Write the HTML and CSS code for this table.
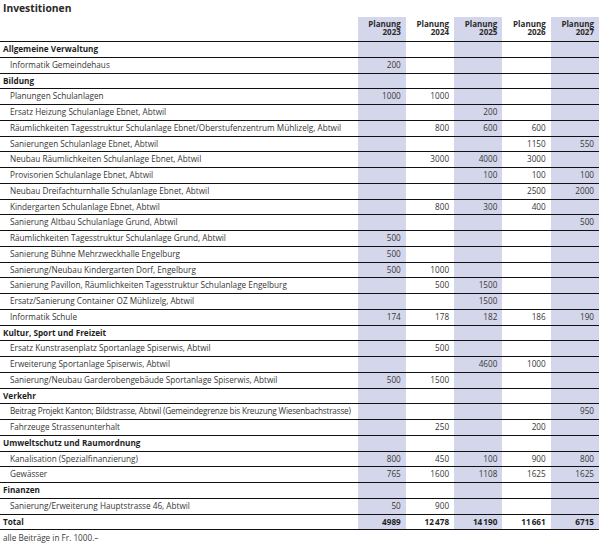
FILE: index.html
```html
<!DOCTYPE html>
<html lang="de">
<head>
<meta charset="utf-8">
<title>Investitionen</title>
<link rel="stylesheet" href="styles.css">
</head>
<body>
<div class="page">
  <h1 class="title">Investitionen</h1>
  <table class="inv">
    <colgroup>
      <col class="c-label">
      <col class="c-num"><col class="c-num"><col class="c-num"><col class="c-num"><col class="c-num">
    </colgroup>
    <thead>
      <tr>
        <th class="label-h"></th>
        <th class="sh"><span class="hl">Planung</span><span class="hl">2023</span></th>
        <th><span class="hl">Planung</span><span class="hl">2024</span></th>
        <th class="sh"><span class="hl">Planung</span><span class="hl">2025</span></th>
        <th><span class="hl">Planung</span><span class="hl">2026</span></th>
        <th class="sh"><span class="hl">Planung</span><span class="hl">2027</span></th>
      </tr>
    </thead>
    <tbody>
      <tr class="cat"><td>Allgemeine Verwaltung</td><td class="sh"></td><td></td><td class="sh"></td><td></td><td class="sh"></td></tr>
      <tr><td>Informatik Gemeindehaus</td><td class="sh">200</td><td></td><td class="sh"></td><td></td><td class="sh"></td></tr>
      <tr class="cat"><td>Bildung</td><td class="sh"></td><td></td><td class="sh"></td><td></td><td class="sh"></td></tr>
      <tr><td>Planungen Schulanlagen</td><td class="sh">1000</td><td>1000</td><td class="sh"></td><td></td><td class="sh"></td></tr>
      <tr><td>Ersatz Heizung Schulanlage Ebnet, Abtwil</td><td class="sh"></td><td></td><td class="sh">200</td><td></td><td class="sh"></td></tr>
      <tr><td>Räumlichkeiten Tagesstruktur Schulanlage Ebnet/Oberstufenzentrum Mühlizelg, Abtwil</td><td class="sh"></td><td>800</td><td class="sh">600</td><td>600</td><td class="sh"></td></tr>
      <tr><td>Sanierungen Schulanlage Ebnet, Abtwil</td><td class="sh"></td><td></td><td class="sh"></td><td>1150</td><td class="sh">550</td></tr>
      <tr><td>Neubau Räumlichkeiten Schulanlage Ebnet, Abtwil</td><td class="sh"></td><td>3000</td><td class="sh">4000</td><td>3000</td><td class="sh"></td></tr>
      <tr><td>Provisorien Schulanlage Ebnet, Abtwil</td><td class="sh"></td><td></td><td class="sh">100</td><td>100</td><td class="sh">100</td></tr>
      <tr><td>Neubau Dreifachturnhalle Schulanlage Ebnet, Abtwil</td><td class="sh"></td><td></td><td class="sh"></td><td>2500</td><td class="sh">2000</td></tr>
      <tr><td>Kindergarten Schulanlage Ebnet, Abtwil</td><td class="sh"></td><td>800</td><td class="sh">300</td><td>400</td><td class="sh"></td></tr>
      <tr><td>Sanierung Altbau Schulanlage Grund, Abtwil</td><td class="sh"></td><td></td><td class="sh"></td><td></td><td class="sh">500</td></tr>
      <tr><td>Räumlichkeiten Tagesstruktur Schulanlage Grund, Abtwil</td><td class="sh">500</td><td></td><td class="sh"></td><td></td><td class="sh"></td></tr>
      <tr><td>Sanierung Bühne Mehrzweckhalle Engelburg</td><td class="sh">500</td><td></td><td class="sh"></td><td></td><td class="sh"></td></tr>
      <tr><td>Sanierung/Neubau Kindergarten Dorf, Engelburg</td><td class="sh">500</td><td>1000</td><td class="sh"></td><td></td><td class="sh"></td></tr>
      <tr><td>Sanierung Pavillon, Räumlichkeiten Tagesstruktur Schulanlage Engelburg</td><td class="sh"></td><td>500</td><td class="sh">1500</td><td></td><td class="sh"></td></tr>
      <tr><td>Ersatz/Sanierung Container OZ Mühlizelg, Abtwil</td><td class="sh"></td><td></td><td class="sh">1500</td><td></td><td class="sh"></td></tr>
      <tr><td>Informatik Schule</td><td class="sh">174</td><td>178</td><td class="sh">182</td><td>186</td><td class="sh">190</td></tr>
      <tr class="cat"><td>Kultur, Sport und Freizeit</td><td class="sh"></td><td></td><td class="sh"></td><td></td><td class="sh"></td></tr>
      <tr><td>Ersatz Kunstrasenplatz Sportanlage Spiserwis, Abtwil</td><td class="sh"></td><td>500</td><td class="sh"></td><td></td><td class="sh"></td></tr>
      <tr><td>Erweiterung Sportanlage Spiserwis, Abtwil</td><td class="sh"></td><td></td><td class="sh">4600</td><td>1000</td><td class="sh"></td></tr>
      <tr><td>Sanierung/Neubau Garderobengebäude Sportanlage Spiserwis, Abtwil</td><td class="sh">500</td><td>1500</td><td class="sh"></td><td></td><td class="sh"></td></tr>
      <tr class="cat"><td>Verkehr</td><td class="sh"></td><td></td><td class="sh"></td><td></td><td class="sh"></td></tr>
      <tr><td class="wide">Beitrag Projekt Kanton; Bildstrasse, Abtwil (Gemeindegrenze bis Kreuzung Wiesenbachstrasse)</td><td class="sh"></td><td></td><td class="sh"></td><td></td><td class="sh">950</td></tr>
      <tr><td>Fahrzeuge Strassenunterhalt</td><td class="sh"></td><td>250</td><td class="sh"></td><td>200</td><td class="sh"></td></tr>
      <tr class="cat"><td>Umweltschutz und Raumordnung</td><td class="sh"></td><td></td><td class="sh"></td><td></td><td class="sh"></td></tr>
      <tr><td>Kanalisation (Spezialfinanzierung)</td><td class="sh">800</td><td>450</td><td class="sh">100</td><td>900</td><td class="sh">800</td></tr>
      <tr><td>Gewässer</td><td class="sh">765</td><td>1600</td><td class="sh">1108</td><td>1625</td><td class="sh">1625</td></tr>
      <tr class="cat"><td>Finanzen</td><td class="sh"></td><td></td><td class="sh"></td><td></td><td class="sh"></td></tr>
      <tr><td>Sanierung/Erweiterung Hauptstrasse 46, Abtwil</td><td class="sh">50</td><td>900</td><td class="sh"></td><td></td><td class="sh"></td></tr>
      <tr class="cat total"><td>Total</td><td class="sh">4989</td><td>12&#8239;478</td><td class="sh">14&#8239;190</td><td>11&#8239;661</td><td class="sh">6715</td></tr>
    </tbody>
  </table>
  <p class="note">alle Beiträge in Fr. 1000.–</p>
</div>
</body>
</html>
```

FILE: styles.css
```css
html, body {
  margin: 0;
  padding: 0;
  background: #ffffff;
}

.page {
  width: 608px;
  font-family: "Open Sans", "Noto Sans", sans-serif;
  color: #3a3a3a;
}

.title {
  margin: 0;
  padding-left: 3px;
  font-size: 10.3px;
  line-height: 17px;
  font-weight: 700;
  color: #2a2a2a;
}

.inv {
  width: 599px;
  border-collapse: collapse;
  table-layout: fixed;
  font-size: 8.2px;
}

.c-label { width: 357.5px; }
.c-num { width: 48.3px; }

.inv th {
  height: 15px;
  padding: 3px 5px 5px 0;
  font-size: 8px;
  font-weight: 700;
  text-align: right;
  vertical-align: bottom;
  color: #2a2a2a;
  border-bottom: 1px solid #111;
}

.inv th .hl {
  display: block;
  height: 8px;
  line-height: 8px;
}

.inv th.label-h {
  text-align: left;
}

.inv td {
  height: 14.75px;
  padding: 0 5px 0 0;
  line-height: 14.75px;
  text-align: right;
  white-space: nowrap;
  border-bottom: 1px solid #111;
  color: #363636;
}

.inv td:first-child {
  text-align: left;
  padding-left: 10px;
  overflow: visible;
}

.inv td.wide {
  letter-spacing: -0.2px;
}

.inv .sh {
  background: #d4d6eb;
}

.inv tr.cat td {
  font-weight: 700;
  color: #1e1e1e;
}

.inv tr.cat td:first-child {
  padding-left: 3px;
}

.note {
  margin: 0;
  padding: 2px 0 0 3px;
  font-size: 8.2px;
  line-height: 12px;
  color: #3a3a3a;
}
```
